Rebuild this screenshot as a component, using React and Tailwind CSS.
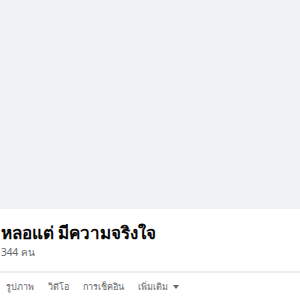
export default function App() {
  const tabs = ['รูปภาพ', 'วิดีโอ', 'การเช็คอิน'];
  return (
    <div className="w-[300px] h-[300px] overflow-hidden bg-white" style={{ fontFamily: '"Noto Sans", "DejaVu Sans", sans-serif' }}>
      <div className="h-[209px] bg-[#f0f2f5]" />
      <div className="pl-[1px] pt-[12px]">
        <h1 className="text-[17px] font-bold leading-[24px] text-[#050505] whitespace-nowrap">หลอแต่ มีความจริงใจ</h1>
        <p className="text-[10px] leading-[14px] text-[#65676b]">344 คน</p>
      </div>
      <div className="mt-[12px] h-[2px] bg-[#eceef1]" />
      <div className="flex items-center gap-[14px] pl-[6px] pt-[6px] text-[9px] leading-[16px] text-[#65676b]">
        {tabs.map((t) => (
          <span key={t}>{t}</span>
        ))}
        <span className="flex items-center gap-[5px]">
          เพิ่มเติม
          <svg width="6" height="4" viewBox="0 0 6 4"><path d="M0 0h6L3 4z" fill="#65676b" /></svg>
        </span>
      </div>
    </div>
  );
}
